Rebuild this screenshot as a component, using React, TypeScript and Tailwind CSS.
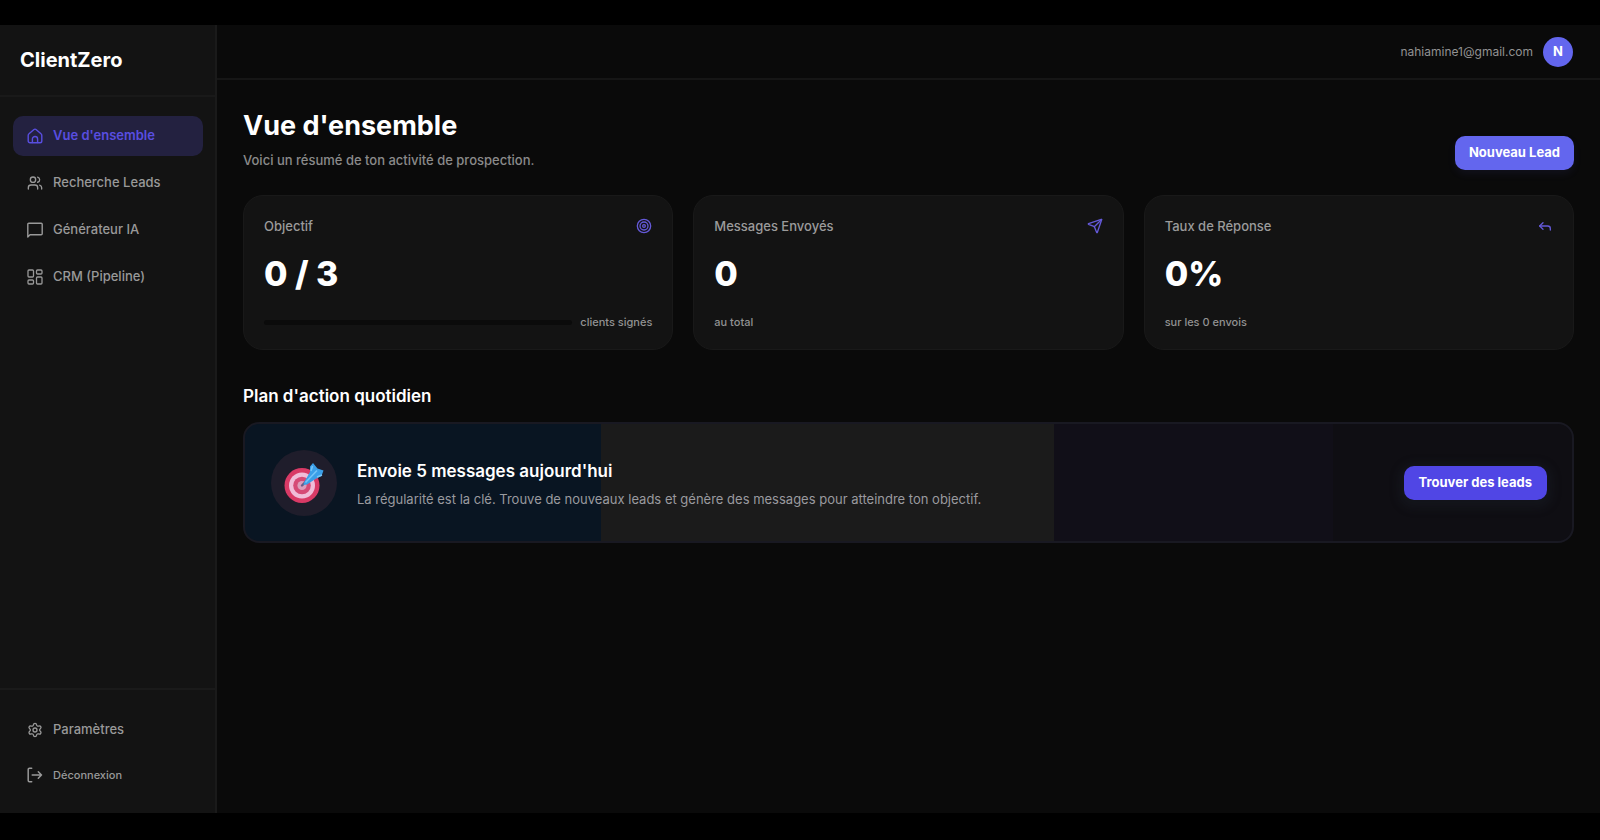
import React from "react";
import { Users, Settings, Target, Send, Reply } from "lucide-react";

const navItems = [
  { label: "Vue d'ensemble", icon: HomeIcon, active: true },
  { label: "Recherche Leads", icon: UsersIcon, active: false },
  { label: "Générateur IA", icon: MessageIcon, active: false },
  { label: "CRM (Pipeline)", icon: GridIcon, active: false },
];

const line = "h-4 w-4 shrink-0";

function HomeIcon() {
  return (
    <svg className={line} viewBox="0 0 16 16" fill="none" stroke="currentColor" strokeWidth="1.4" strokeLinecap="round" strokeLinejoin="round" aria-hidden="true">
      <path d="M1.2 7.4c0-.7.3-1.2.8-1.600L6.700 1.700a2 2 0 0 1 2.600 0L14 5.800c.5.4.8.9.8 1.600V13a1.800 1.800 0 0 1-1.800 1.800H3A1.800 1.800 0 0 1 1.200 13z" />
      <path d="M5.400 14.500v-3.400a2.600 2.600 0 0 1 5.200 0v3.400" />
    </svg>
  );
}

function UsersIcon() {
  return <Users className={line} strokeWidth={2} aria-hidden="true" />;
}

function MessageIcon() {
  return (
    <svg className={line} viewBox="0 0 16 16" fill="none" stroke="currentColor" strokeWidth="1.4" strokeLinecap="round" strokeLinejoin="round" aria-hidden="true">
      <path d="M.8 15V2.200a1 1 0 0 1 1-1h12.400a1 1 0 0 1 1 1v9.600a1 1 0 0 1-1 1H3z" />
    </svg>
  );
}

function GridIcon() {
  return (
    <svg className={line} viewBox="0 0 16 16" fill="none" stroke="currentColor" strokeWidth="1.3" aria-hidden="true">
      <rect x="1" y="1" width="5.5" height="7" rx="1" />
      <rect x="9.5" y="1" width="5.5" height="4" rx="1" />
      <rect x="9.5" y="8" width="5.5" height="7" rx="1" />
      <rect x="1" y="11" width="5.5" height="4" rx="1" />
    </svg>
  );
}

function LogOutIcon() {
  return (
    <svg className={line} viewBox="0 0 16 16" fill="none" stroke="currentColor" strokeWidth="1.5" strokeLinecap="round" strokeLinejoin="round" aria-hidden="true">
      <path d="M4.700 1.200H2.400a1.200 1.200 0 0 0-1.200 1.200v11.200a1.200 1.200 0 0 0 1.200 1.200h2.300M5.200 8h9.300M11.300 4.800 14.500 8l-3.200 3.200" />
    </svg>
  );
}

function Dartboard() {
  return (
    <svg className="h-10 w-10" viewBox="0 0 40 40" aria-hidden="true">
      <circle cx="18" cy="22.5" r="17.500" fill="#d93a66" />
      <circle cx="18" cy="22.5" r="13" fill="#f0bcd8" />
      <circle cx="18" cy="22.5" r="8.800" fill="#d64a76" />
      <circle cx="18" cy="22.5" r="4.600" fill="#dc9dbb" />
      <path d="m18 22.500 5-5" stroke="#6b5a86" strokeWidth="2.400" strokeLinecap="round" />
      <path d="M20 19.500 26 9V3.500L29 0l4.500 5.500L39.500 7.500 37.500 13l-6 3-8.500 5.500-3.500.500z" fill="#3b9fe8" />
      <path d="m21.500 19.500 11.500-12M27 8l1.500-5M33 14l5-2" stroke="#74c4f8" strokeWidth="1.600" fill="none" />
    </svg>
  );
}

function StatCard({ title, value, icon, children }: { title: string; value: string; icon: React.ReactNode; children: React.ReactNode }) {
  return (
    <article className="flex flex-col rounded-[20px] border border-[#191919] bg-[#131313] px-5 pt-5 pb-[17px]">
      <div className="flex h-5 items-center justify-between">
        <h2 className="text-[13px] leading-5 font-medium text-[#9b9b9b]">{title}</h2>
        {icon}
      </div>
      <p className="mt-[18px] text-[34px] leading-10 font-extrabold text-white">{value}</p>
      <div className="mt-[18px] flex h-5 items-center gap-2 text-[11px] leading-5 font-medium text-[#929292]">{children}</div>
    </article>
  );
}

export default function App() {
  return (
    <div className="flex min-h-screen bg-black pt-[25px] pb-[27px] font-['Inter',sans-serif]">
      <aside className="flex w-[217px] shrink-0 flex-col border-r-2 border-[#1a1a1a] bg-[#131313]">
        <div className="flex h-[72px] items-center border-b-2 border-[#191919] px-5 text-xl font-bold text-white">ClientZero</div>
        <nav className="flex flex-col gap-[7px] pt-[19px] pr-3 pl-[13px]" aria-label="Navigation principale">
          {navItems.map(({ label, icon: Icon, active }) => (
            <a
              key={label}
              href="#"
              aria-current={active ? "page" : undefined}
              className={
                active
                  ? "flex h-10 items-center gap-[10px] rounded-[10px] bg-[#232140] px-[14px] text-[13px] font-semibold text-[#594ee0]"
                  : "flex h-10 items-center gap-[10px] rounded-[10px] px-[14px] text-[13px] font-medium text-[#999999]"
              }
            >
              <Icon />
              {label}
            </a>
          ))}
        </nav>
        <div className="mt-auto flex flex-col gap-[5px] border-t-2 border-[#1a1a1a] pt-5 pr-3 pb-[18px] pl-[13px]">
          <a href="#" className="flex h-10 items-center gap-[10px] px-[14px] text-[13px] font-medium text-[#999999]">
            <Settings className={line} strokeWidth={2} aria-hidden="true" />
            Paramètres
          </a>
          <button type="button" className="flex h-10 items-center gap-[10px] px-[14px] text-[11px] font-medium text-[#999999]">
            <LogOutIcon />
            Déconnexion
          </button>
        </div>
      </aside>

      <div className="flex min-w-0 flex-1 flex-col bg-[#0a0a0a]">
        <header className="flex h-[55px] items-center justify-end gap-[10px] border-b-2 border-[#161616] px-[27px]">
          <span className="text-xs leading-5 text-[#929292]">nahiamine1@gmail.com</span>
          <span className="flex h-[30px] w-[30px] items-center justify-center rounded-full bg-[#6366ee] text-[13px] font-bold text-white">N</span>
        </header>

        <main className="flex-1 px-[26px] pt-[26px]">
          <div className="flex items-end justify-between">
            <div>
              <h1 className="text-[27px] leading-10 font-bold text-white">Vue d'ensemble</h1>
              <p className="mt-1 text-[13px] leading-5 font-medium text-[#8a8a8a]">Voici un résumé de ton activité de prospection.</p>
            </div>
            <button type="button" className="h-[34px] rounded-[10px] bg-[#6366ee] px-[14px] text-[13px] font-bold text-white shadow-[0_4px_8px_rgba(99,102,238,0.08)]">
              Nouveau Lead
            </button>
          </div>

          <section className="mt-[25px] grid grid-cols-3 gap-5" aria-label="Statistiques">
            <StatCard title="Objectif" value="0 / 3" icon={<Target className="h-4 w-4 text-[#6459d8]" aria-hidden="true" />}>
              <div className="h-[5px] flex-1 rounded-full bg-[#0b0b0b]" />
              <span>clients signés</span>
            </StatCard>
            <StatCard title="Messages Envoyés" value="0" icon={<Send className="h-4 w-4 text-[#6459d8]" aria-hidden="true" />}>
              au total
            </StatCard>
            <StatCard title="Taux de Réponse" value="0%" icon={<Reply className="h-4 w-4 text-[#6459d8]" aria-hidden="true" />}>
              sur les 0 envois
            </StatCard>
          </section>

          <section className="mt-8">
            <h2 className="text-[17px] leading-7 font-semibold text-white">Plan d'action quotidien</h2>
            <div className="mt-3 flex min-h-[121px] items-center rounded-2xl border-2 border-[#191922] bg-[linear-gradient(90deg,#091522_0_26.8%,#1b1b1b_26.8%_61%,#110f18_61%_82%,#0f0e13_82%)] pr-[25px] pl-[26px]">
              <div className="flex h-[66px] w-[66px] shrink-0 items-center justify-center rounded-full bg-[#1f1d2b]">
                <Dartboard />
              </div>
              <div className="ml-5 flex-1">
                <h3 className="text-[17px] leading-7 font-semibold text-white">Envoie 5 messages aujourd'hui</h3>
                <p className="mt-1 text-[13px] leading-5 text-[#9a9a9f]">La régularité est la clé. Trouve de nouveaux leads et génère des messages pour atteindre ton objectif.</p>
              </div>
              <button type="button" className="h-[34px] rounded-[10px] bg-[#5046e5] px-[15px] text-[13px] font-bold text-white shadow-[0_3px_8px_6px_rgba(30,36,46,0.3)]">
                Trouver des leads
              </button>
            </div>
          </section>
        </main>
      </div>
    </div>
  );
}
